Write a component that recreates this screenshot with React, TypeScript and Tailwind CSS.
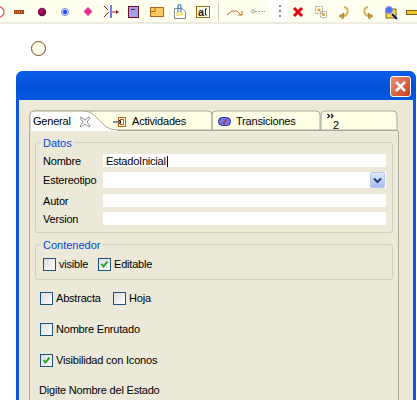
import type { ReactNode } from "react";

const font = { fontFamily: '"Liberation Sans", Tahoma, sans-serif' };

// icons are drawn in page coordinates, the viewBox cuts out the slice
function Slice({ from, to, children }: { from: number; to: number; children?: ReactNode }) {
  return (
    <svg width={to - from} height={22} viewBox={`${from} 0 ${to - from} 22`} className="shrink-0">
      {children}
    </svg>
  );
}

function Toolbar() {
  return (
    <div className="flex h-[24px] w-full overflow-hidden border-b-2 border-b-[#ecebdf] bg-[#fffff0]">
      <Slice from={0} to={26}>
        <circle cx="-1" cy="12" r="5" fill="#fff" stroke="#e06080" strokeWidth="1.5" />
        <rect x="14" y="10" width="10" height="4" fill="#a84410" />
        <path d="M15 12h8" stroke="#f0c8a0" strokeDasharray="1 1" />
      </Slice>
      <Slice from={26} to={54}>
        <defs>
          <radialGradient id="ball" cx="40%" cy="35%" r="70%">
            <stop offset="0%" stopColor="#c01868" />
            <stop offset="100%" stopColor="#500838" />
          </radialGradient>
        </defs>
        <circle cx="42" cy="12" r="4.2" fill="url(#ball)" />
      </Slice>
      <Slice from={54} to={76}>
        <circle cx="65" cy="12" r="3.5" fill="#c0d4f8" stroke="#6f8fd8" />
        <circle cx="65" cy="12" r="2" fill="#2040e8" />
      </Slice>
      <Slice from={76} to={100}>
        <path d="M88 7l4.5 4.5-4.5 4.5-4.5-4.5z" fill="#e83090" />
      </Slice>
      <Slice from={100} to={124}>
        <path d="M104 6l4 4M109 12l-5 5" stroke="#a01020" fill="none" />
        <rect x="110" y="5" width="2" height="13" fill="#7a7af0" />
        <path d="M112 12h5" stroke="#a01020" />
        <path d="M116 10l3 2-3 2z" fill="#a01020" />
      </Slice>
      <Slice from={124} to={146}>
        <rect x="128.5" y="6.5" width="10" height="11" fill="#a0a0f0" stroke="#701020" />
        <path d="M131 9.5h4" stroke="#701020" />
      </Slice>
      <Slice from={146} to={170}>
        <rect x="150.5" y="7.5" width="13" height="9" fill="#ffc860" stroke="#a86810" />
        <path d="M150 11.5h5v-4" stroke="#a86810" fill="none" />
      </Slice>
      <Slice from={170} to={192}>
        <path d="M174.5 8.5h8l3 3v7h-11z" fill="#fff" stroke="#8a8a8a" />
        <path d="M176 13h7M176 15h7" stroke="#e8d040" />
        <path d="M178 12V6a1.5 1.5 0 013 0v6" stroke="#3080d0" strokeWidth="1.2" fill="none" />
      </Slice>
      <Slice from={192} to={214}>
        <rect x="196.5" y="6.5" width="13" height="11" fill="#fffff0" stroke="#a86810" />
        <text x="198" y="16" fontSize="11" fontWeight="700" fill="#302010" style={{ fontFamily: '"Liberation Sans", sans-serif' }}>
          a
        </text>
        <path d="M207 9h-1.500v6h1.500" stroke="#302010" fill="none" />
      </Slice>
      <Slice from={214} to={222}>
        <rect x="218" y="3" width="1" height="18" fill="#c8c8bc" />
      </Slice>
      <Slice from={222} to={247}>
        <path d="M227 15l5-4h5l4 4" stroke="#d07018" fill="none" />
        <path d="M238 15h4v-4" stroke="#d07018" fill="none" />
      </Slice>
      <Slice from={247} to={269}>
        <circle cx="253" cy="11.5" r="1.5" fill="#fff" stroke="#a0a0a0" />
        <path d="M255 11.5h10" stroke="#a0a0a0" strokeDasharray="2 1" />
      </Slice>
      <div className="h-[22px] w-[18px] shrink-0 bg-white">
        <Slice from={269} to={287}>
          <path d="M280 5v15" stroke="#909090" strokeWidth="2" strokeDasharray="2 3" />
        </Slice>
      </div>
      <Slice from={287} to={309}>
        <path d="M294 8l8 8M302 8l-8 8" stroke="#e00010" strokeWidth="3" />
      </Slice>
      <Slice from={309} to={333}>
        <rect x="315.500" y="6.500" width="7" height="7" fill="none" stroke="#a0a0a0" strokeDasharray="2 1" />
        <rect x="320.500" y="11.500" width="6" height="6" fill="none" stroke="#a0a0a0" strokeDasharray="2 1" />
        <circle cx="319" cy="10" r="1.600" fill="#d8a030" />
        <circle cx="323.500" cy="14.500" r="1.600" fill="#d8a030" />
      </Slice>
      <Slice from={333} to={356}>
        <path d="M344 7c5 1 5 7 0 9l-3 1" stroke="#d8b060" strokeWidth="2" fill="none" />
        <path d="M344 13l-5 3 4 3z" fill="#d8a030" stroke="#705020" strokeWidth=".5" />
      </Slice>
      <Slice from={356} to={380}>
        <path d="M368 7c-5 1-5 7 0 9l2 1" stroke="#d8b060" strokeWidth="2" fill="none" />
        <path d="M368 13l5 3-4 3z" fill="#d8a030" stroke="#705020" strokeWidth=".5" />
      </Slice>
      <Slice from={380} to={402}>
        <rect x="386" y="9" width="10" height="9" fill="#f0e050" stroke="#806010" />
        <circle cx="389" cy="10" r="3.500" fill="#5070f0" stroke="#8090e8" />
        <path d="M392 14l5 5" stroke="#101080" strokeWidth="2" />
      </Slice>
      <Slice from={402} to={417}>
        <rect x="406.500" y="10.500" width="12" height="4" fill="#f0c830" stroke="#806010" />
      </Slice>
    </div>
  );
}

function Check({ on }: { on?: boolean }) {
  return (
    <span className="relative inline-block h-[13px] w-[13px] shrink-0 border border-[#1c5180] bg-gradient-to-br from-[#dcdcd7] to-white">
      {on && (
        <svg width="11" height="11" viewBox="0 0 11 11" className="absolute left-0 top-0">
          <path d="M2.500 5l2 2.500L8.500 2.500" stroke="#21a121" strokeWidth="2" fill="none" />
        </svg>
      )}
    </span>
  );
}

function Row({ label, h = 13, mb, children }: { label: string; h?: number; mb: string; children?: ReactNode }) {
  return (
    <div className={`flex items-center ${mb}`}>
      <span className="w-[60px] pt-px text-[11px] leading-none text-black">{label}</span>
      <div className="relative flex flex-1 items-center bg-white pl-[3px] pt-px text-[11px] leading-none" style={{ height: h }}>
        {children}
      </div>
    </div>
  );
}

function TabShapes() {
  return (
    <svg width="369" height="21" viewBox="29 110 369 21" className="absolute left-0 top-0">
      <path d="M30 130v-15q0-4 4-4h174q4 0 4 4v15zM212 130v-15q0-4 4-4h100q4 0 4 4v15zM321 130v-15q0-4 4-4h68q4 0 4 4v15z" fill="#ffffe6" stroke="#aca899" />
      <path d="M30 131v-16q0-4 4-4h50c14 0 16 19 33 19v1z" fill="#fff" stroke="#aca899" />
      <path d="M117 130.500h281" stroke="#aca899" fill="none" />
      <path d="M31 130h86v1h-86z" fill="#fff" />
    </svg>
  );
}

function Tabs() {
  return (
    <div className="relative flex h-[21px] items-center pt-[2px] text-[11px] leading-none text-black">
      <TabShapes />
      <div className="relative flex w-[84px] items-center pl-[4px]">
        General
        <svg width="12" height="12" viewBox="0 0 12 12" className="ml-[8px]">
          <path d="M2 1l4 3 4-3 1 1-3 4 3 4-1 1-4-3-4 3-1-1 3-4-3-4z" fill="#fff" stroke="#909090" />
        </svg>
      </div>
      <div className="relative flex w-[100px] items-center">
        <svg width="13" height="12" viewBox="0 0 13 12" className="mr-[6px]">
          <rect x="5.500" y="1.500" width="7" height="9" fill="none" stroke="#b8641c" />
          <rect x="7.500" y="3.500" width="3" height="5" fill="none" stroke="#b8641c" />
          <path d="M0 6h8M6 4l2 2-2 2" stroke="#102050" fill="none" />
        </svg>
        Actividades
      </div>
      <div className="relative flex w-[109px] items-center pl-[5px]">
        <svg width="13" height="9" viewBox="0 0 13 9" className="mr-[5px]">
          <rect x=".5" y=".5" width="12" height="8" rx="4" fill="#7878e8" stroke="#2020a0" />
          <path d="M4 6h3V3h2" stroke="#a02020" fill="none" />
        </svg>
        Transiciones
      </div>
      <div className="relative flex h-[19px] w-[30px] items-end pl-[11px]">
        <svg width="9" height="6" viewBox="0 0 9 6" className="absolute left-[5px] top-[1px]">
          <path d="M.5 1l2 2-2 2M4 1l2 2-2 2" stroke="#101828" strokeWidth="1.300" fill="none" />
        </svg>
        2
      </div>
    </div>
  );
}

export default function App() {
  return (
    <div className="h-[400px] w-[417px] overflow-hidden bg-white tracking-[-0.2px]" style={font}>
      <Toolbar />
      <div className="ml-[31px] mt-[17px] h-[15px] w-[15px] rounded-full border border-[#7a4a10] bg-[#fffff0]" />
      <div className="ml-[16px] mt-[15px] h-[340px] w-[400px] overflow-hidden rounded-t-[7px] bg-[#0f55e0]">
        <div className="flex h-[29px] items-start justify-end bg-gradient-to-b from-[#0a5fe8] via-[#0350d8] to-[#0358e0] pr-[5px] pt-[5px]">
          <div className="flex h-[21px] w-[21px] items-center justify-center rounded-[3px] border border-white bg-gradient-to-br from-[#e89070] to-[#c83c18]">
            <svg width="13" height="13" viewBox="0 0 13 13">
              <path d="M2 2l9 9M11 2l-9 9" stroke="#fff" strokeWidth="2.600" />
            </svg>
          </div>
        </div>
        <div className="mx-[3px] h-[311px] bg-[#ece9d8] pl-[10px] pt-[10px]">
          <div className="relative h-[300px] w-[370px]">
            <Tabs />
            <div className="h-[280px] border-x border-[#aca899] pl-[5px] pr-[5px] pt-[11px]">
              <div className="relative h-[91px] rounded-[3px] border border-[#d0d0bf] pl-[7px] pr-[6px] pt-[11px]">
                <span className="absolute left-[5px] top-[-5px] bg-[#ece9d8] px-[2px] text-[11px] leading-none tracking-normal text-[#0046d5]">Datos</span>
                <Row label="Nombre" mb="mb-[5px]">
                  EstadoInicial
                  <span className="ml-px h-[11px] w-px bg-black" />
                </Row>
                <Row label="Estereotipo" h={16} mb="mb-[6px]">
                  <div className="absolute right-[1px] top-0 flex h-[16px] w-[15px] items-center justify-center rounded-[2px] border border-[#b4c8f0] bg-gradient-to-b from-[#dfe7fb] to-[#a8bdf0]">
                    <svg width="9" height="7" viewBox="0 0 9 7">
                      <path d="M1 1.500l3.500 3.500L8 1.500" stroke="#28406e" strokeWidth="2" fill="none" />
                    </svg>
                  </div>
                </Row>
                <Row label="Autor" mb="mb-[5px]" />
                <Row label="Version" mb="mb-0" />
              </div>
              <div className="relative mt-[11px] flex h-[36px] items-center rounded-[3px] border border-[#d0d0bf] pl-[7px] pt-[4px] text-[11px] text-black">
                <span className="absolute left-[5px] top-[-5px] bg-[#ece9d8] px-[2px] leading-none tracking-normal text-[#0046d5]">Contenedor</span>
                <Check />
                <span className="ml-[3px] w-[39px]">visible</span>
                <Check on />
                <span className="ml-[3px]">Editable</span>
              </div>
              <div className="mt-[12px] pl-[5px] text-[11px] leading-[13px] text-black">
                <div className="flex items-center">
                  <Check />
                  <span className="ml-[3px] w-[57px]">Abstracta</span>
                  <Check />
                  <span className="ml-[3px]">Hoja</span>
                </div>
                <div className="mt-[18px] flex items-center">
                  <Check />
                  <span className="ml-[3px]">Nombre Enrutado</span>
                </div>
                <div className="mt-[18px] flex items-center">
                  <Check on />
                  <span className="ml-[3px]">Visibilidad con Iconos</span>
                </div>
                <div className="-ml-px mt-[17px]">Digite Nombre del Estado</div>
              </div>
            </div>
          </div>
        </div>
      </div>
    </div>
  );
}
